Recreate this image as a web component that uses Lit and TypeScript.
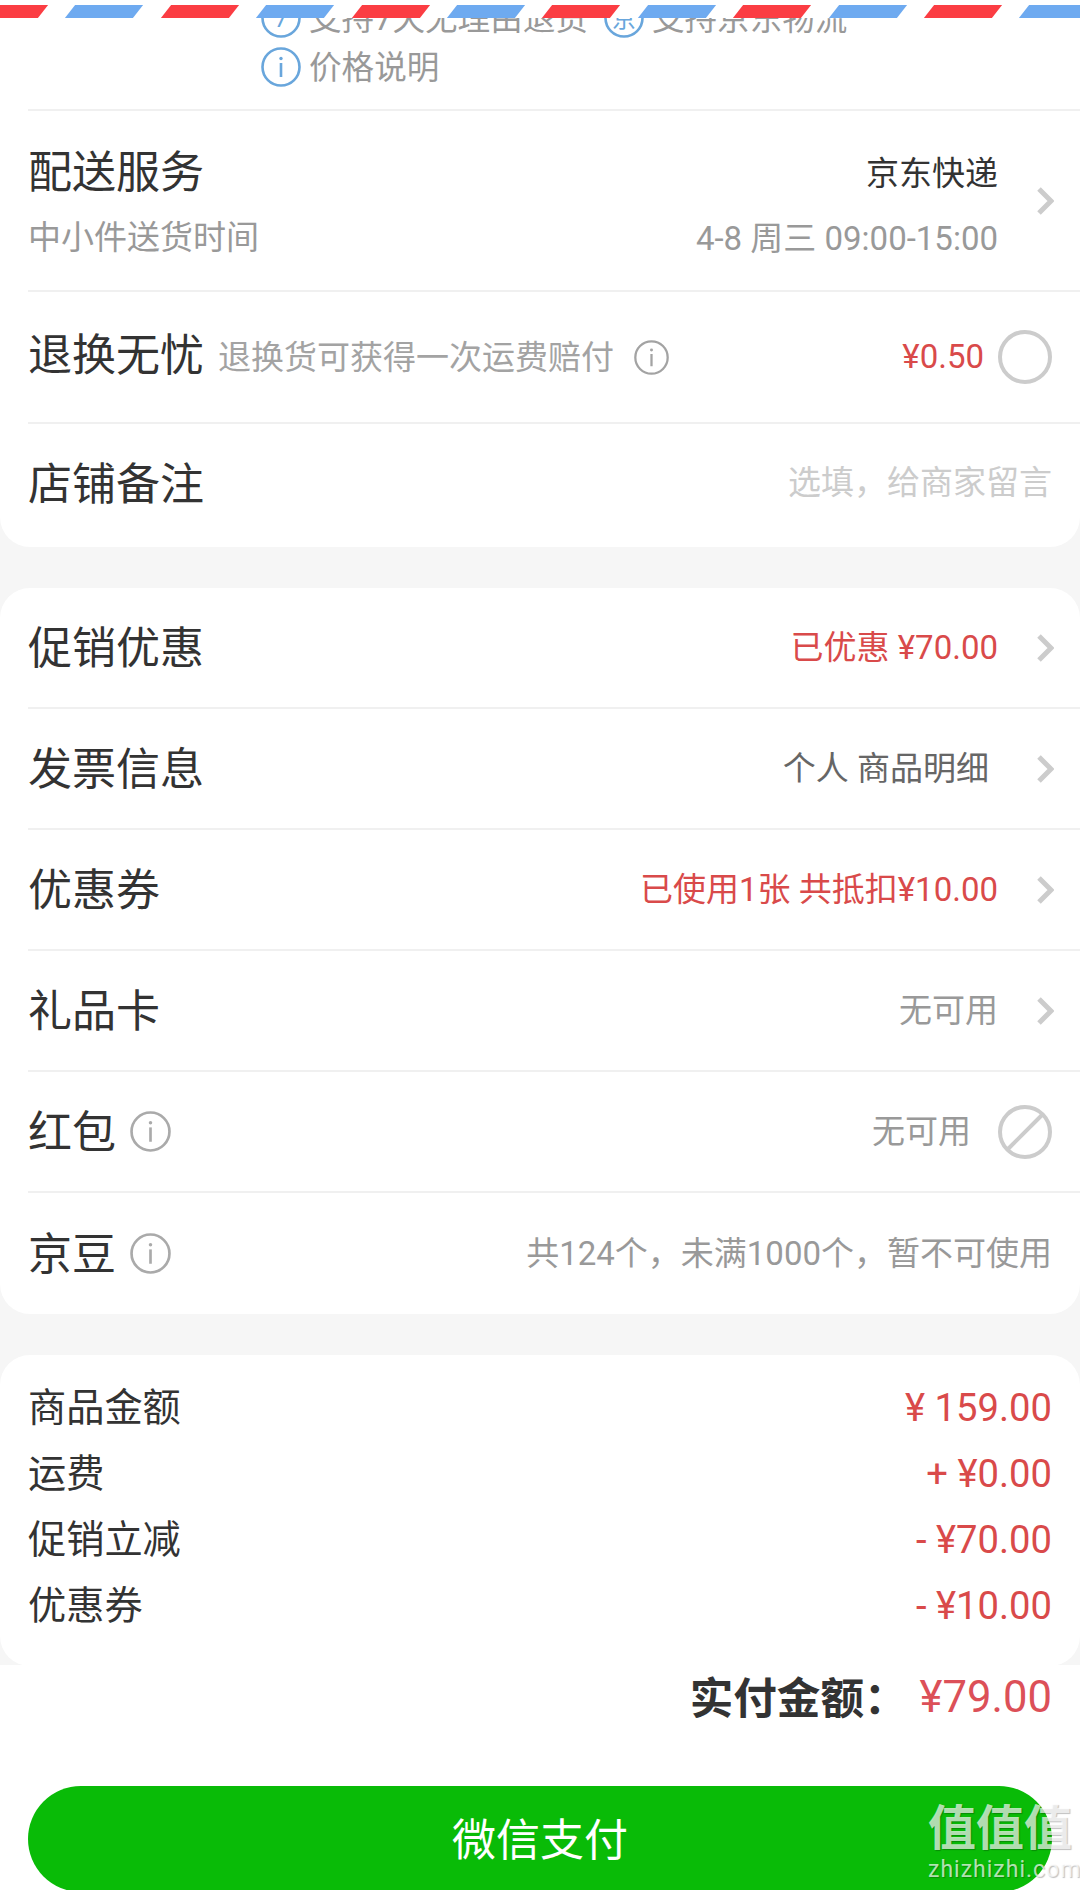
import { LitElement, html, svg, css } from 'lit';
import { customElement } from 'lit/decorators.js';

interface CheckoutRow {
  title: string;
  info?: boolean;
  value: string;
  tone: 'red' | 'gray' | 'dark';
  end: 'chevron' | 'disabled' | 'none';
  inset?: boolean;
}

const OPTION_ROWS: CheckoutRow[] = [
  { title: '促销优惠', value: '已优惠 ¥70.00', tone: 'red', end: 'chevron' },
  { title: '发票信息', value: '个人 商品明细', tone: 'dark', end: 'chevron', inset: true },
  { title: '优惠券', value: '已使用1张 共抵扣¥10.00', tone: 'red', end: 'chevron' },
  { title: '礼品卡', value: '无可用', tone: 'gray', end: 'chevron' },
  { title: '红包', info: true, value: '无可用', tone: 'gray', end: 'disabled' },
  { title: '京豆', info: true, value: '共124个，未满1000个，暂不可使用', tone: 'gray', end: 'none' },
];

const SUMMARY = [
  ['商品金额', '¥ 159.00'],
  ['运费', '+ ¥0.00'],
  ['促销立减', '- ¥70.00'],
  ['优惠券', '- ¥10.00'],
];

const chevron = html`<svg class="chevron" viewBox="0 0 18 30">
  <path d="M3 3 L15 15 L3 27" fill="none" stroke="#ccc" stroke-width="5" />
</svg>`;

const infoIcon = (cls: string) => html`<svg class=${cls} viewBox="0 0 40 40">
  <circle cx="20" cy="20" r="18.5" fill="none" stroke="currentColor" stroke-width="2.6" />
  <circle cx="20" cy="11.5" r="1.7" fill="currentColor" />
  <rect x="18.7" y="16" width="2.6" height="14" fill="currentColor" />
</svg>`;

const badge = (glyph: string) => html`<svg class="badge" viewBox="0 0 40 40">
  <circle cx="20" cy="20" r="18.5" fill="none" stroke="currentColor" stroke-width="2.6" />
  ${svg`<text x="20" y="29" text-anchor="middle" font-size="24" fill="currentColor">${glyph}</text>`}
</svg>`;

@customElement('app-root')
export class AppRoot extends LitElement {
  static styles = css`
    :host {
      display: block;
      font-family: Roboto, 'Noto Sans CJK SC', sans-serif;
      color: #333;
    }
    .page {
      position: relative;
      height: 1890px;
      overflow: hidden;
      background: #f6f6f6;
    }
    .stripes {
      position: absolute;
      top: 0;
      left: 0;
      right: 0;
      height: 18px;
      padding-top: 5px;
      box-sizing: border-box;
      background: #fff;
      display: flex;
      gap: 27.4px;
      overflow: hidden;
      z-index: 2;
    }
    .stripes i {
      flex: none;
      width: 68px;
      height: 13px;
      transform: skewX(-38deg);
      background: #6eaaf0;
    }
    .stripes i:first-child {
      margin-left: -25px;
    }
    .stripes i.red {
      background: #fb3d43;
    }
    .card {
      background: #fff;
      border-radius: 30px;
      overflow: hidden;
      margin-bottom: 41px;
    }
    .card.first {
      margin-top: -7px;
      border-radius: 0 0 30px 30px;
    }
    .services {
      margin-left: 28px;
      padding: 0 0 18px 233px;
      border-bottom: 2px solid #f0f0f0;
      display: flex;
      flex-wrap: wrap;
      font-size: 32.6px;
      color: #999;
    }
    .service {
      display: flex;
      align-items: center;
      height: 49px;
      gap: 8px;
      margin-right: 16px;
      white-space: nowrap;
    }
    .service span {
      margin-bottom: 4px;
    }
    .service.wide {
      margin-right: 200px;
    }
    .badge {
      width: 40px;
      height: 40px;
      color: #69a6dc;
      flex: none;
    }
    .row {
      margin-left: 28px;
      padding-right: 28px;
      height: 121px;
      box-sizing: border-box;
      border-bottom: 2px solid #f0f0f0;
      display: flex;
      align-items: center;
    }
    .row:last-child {
      border-bottom: none;
    }
    .title {
      font-size: 44px;
      line-height: 60px;
      white-space: nowrap;
    }
    .options .title {
      margin-top: 2px;
    }
    .value {
      margin-left: auto;
      margin-bottom: 5px;
      font-size: 33px;
      white-space: nowrap;
    }
    .value.inset {
      margin-right: 9px;
    }
    .red {
      color: #d94a4a;
    }
    .gray {
      color: #999;
    }
    .dark {
      color: #666;
    }
    .chevron {
      width: 18px;
      height: 30px;
      flex: none;
      margin: 0 -2px 0 38px;
    }
    .ring {
      width: 54px;
      height: 54px;
      flex: none;
    }
    .row .info {
      width: 41px;
      height: 41px;
      margin-left: 14px;
      color: #aaa;
      flex: none;
    }
    .delivery {
      height: 181px;
      align-items: center;
    }
    .delivery .col {
      padding-top: 12px;
      line-height: 65px;
      white-space: nowrap;
    }
    .delivery .col .sub {
      margin-top: 2px;
    }
    .delivery .col.end {
      margin-left: auto;
      padding-top: 10px;
      text-align: right;
    }
    .delivery .col.end .sub {
      margin-top: 0;
    }
    .sub {
      font-size: 33px;
      color: #999;
    }
    .carrier {
      font-size: 33px;
      color: #333;
    }
    .returns {
      height: 132px;
    }
    .returns .title {
      margin-bottom: 2px;
    }
    .hint {
      font-size: 33px;
      color: #a3a3a3;
      margin-left: 14px;
      margin-bottom: 5px;
      white-space: nowrap;
    }
    .returns .info {
      width: 35px;
      height: 35px;
      margin-left: 20px;
      color: #a3a3a3;
    }
    .returns .value {
      margin-right: 14px;
      margin-bottom: 2px;
    }
    .note {
      height: 123px;
    }
    .note .title {
      margin-bottom: 2px;
    }
    .note .value {
      color: #ccc;
      margin-bottom: 11px;
    }
    .ring.margin {
      margin-left: 27px;
    }
    .summary {
      padding: 20px 28px 27px;
      margin-bottom: 0;
    }
    .summary div {
      display: flex;
      justify-content: space-between;
      height: 66px;
      line-height: 66px;
      font-size: 38.2px;
    }
    .summary span:last-child {
      color: #d94a4a;
    }
    .footer {
      background: #fff;
      height: 226px;
      margin-top: -1px;
      padding: 0 28px;
    }
    .total {
      display: flex;
      justify-content: flex-end;
      align-items: center;
      height: 64px;
      font-size: 43.6px;
    }
    .total b {
      font-weight: 700;
      margin: 0 10px 4px 0;
    }
    .total span {
      color: #dc5058;
      margin-left: 2px;
    }
    .pay {
      margin-top: 57px;
      height: 106px;
      padding-bottom: 4px;
      box-sizing: border-box;
      border-radius: 53px;
      background: #09bb07;
      color: #fff;
      font-size: 44px;
      display: flex;
      align-items: center;
      justify-content: center;
    }
    .mark {
      position: absolute;
      right: 8px;
      top: 1800px;
      width: 144px;
      text-align: center;
      color: rgba(255, 255, 255, 0.7);
      text-shadow: 1px 1px 1px rgba(0, 0, 0, 0.25);
      z-index: 3;
    }
    .mark b {
      display: block;
      font-size: 48px;
      line-height: 58px;
      font-weight: 700;
    }
    .mark small {
      display: block;
      font-size: 23px;
      line-height: 24px;
      letter-spacing: 1px;
    }
  `;

  private renderRow(row: CheckoutRow) {
    return html`<div class="row">
      <span class="title">${row.title}</span>
      ${row.info ? infoIcon('info') : null}
      <span class="value ${row.tone} ${row.inset ? 'inset' : ''}">${row.value}</span>
      ${row.end === 'chevron' ? chevron : null}
      ${row.end === 'disabled'
        ? html`<svg class="ring margin" viewBox="0 0 54 54">
            <circle cx="27" cy="27" r="25" fill="none" stroke="#ccc" stroke-width="4" />
            <path d="M10 44 L44 10" stroke="#ccc" stroke-width="4" />
          </svg>`
        : null}
    </div>`;
  }

  render() {
    return html`<div class="page">
      <div class="stripes">
        ${Array.from({ length: 12 }, (_, i) => html`<i class=${i % 2 === 0 ? 'red' : ''}></i>`)}
      </div>

      <section class="card first">
        <div class="services">
          <div class="service">${badge('7')}<span>支持7天无理由退货</span></div>
          <div class="service wide">${badge('京')}<span>支持京东物流</span></div>
          <div class="service">${infoIcon('badge')}<span>价格说明</span></div>
        </div>
        <div class="row delivery">
          <div class="col">
            <div class="title">配送服务</div>
            <div class="sub">中小件送货时间</div>
          </div>
          <div class="col end">
            <div class="carrier">京东快递</div>
            <div class="sub">4-8 周三 09:00-15:00</div>
          </div>
          ${chevron}
        </div>
        <div class="row returns">
          <span class="title">退换无忧</span>
          <span class="hint">退换货可获得一次运费赔付</span>
          ${infoIcon('info')}
          <span class="value red">¥0.50</span>
          <svg class="ring" viewBox="0 0 54 54">
            <circle cx="27" cy="27" r="25" fill="none" stroke="#ccc" stroke-width="4" />
          </svg>
        </div>
        <div class="row note">
          <span class="title">店铺备注</span>
          <span class="value">选填，给商家留言</span>
        </div>
      </section>

      <section class="card options">${OPTION_ROWS.map((row) => this.renderRow(row))}</section>

      <section class="card summary">
        ${SUMMARY.map(([label, amount]) => html`<div><span>${label}</span><span>${amount}</span></div>`)}
      </section>

      <footer class="footer">
        <div class="total"><b>实付金额：</b><span>¥79.00</span></div>
        <div class="pay">微信支付</div>
      </footer>

      <div class="mark"><b>值值值</b><small>zhizhizhi.com</small></div>
    </div>`;
  }
}
